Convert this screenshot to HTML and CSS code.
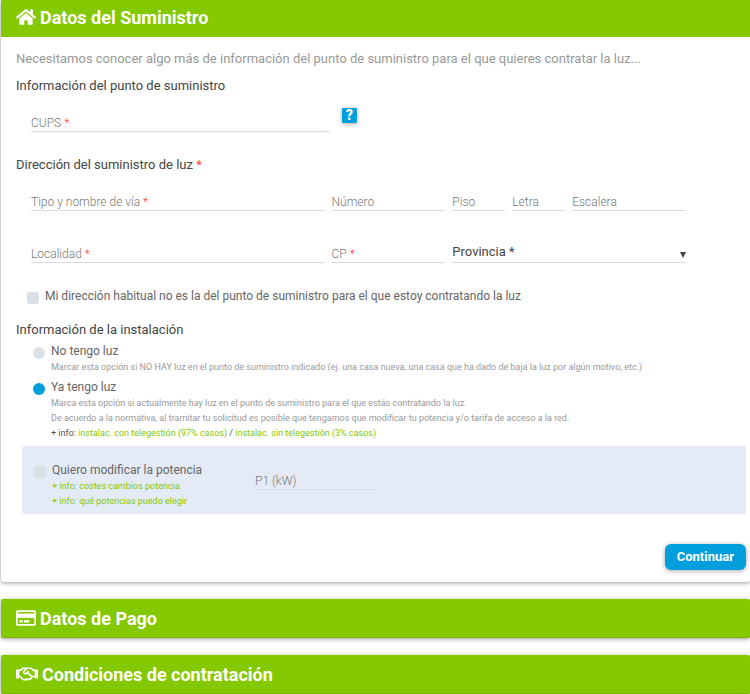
FILE: index.html
```html
<!DOCTYPE html>
<html lang="es">
<head>
    <meta charset="utf-8">
    <title>Datos del Suministro</title>
    <link rel="stylesheet" href="styles.css">
</head>
<body>
<form class="steps">
    <section class="card">
        <h2 class="card-header">
            <svg class="icon" viewBox="0 0 576 512"><path d="M280.37 148.26L96 300.11V464a16 16 0 0 0 16 16l112.06-.29a16 16 0 0 0 15.92-16V368a16 16 0 0 1 16-16h64a16 16 0 0 1 16 16v95.64a16 16 0 0 0 16 16.05L464 480a16 16 0 0 0 16-16V300L295.67 148.26a12.19 12.19 0 0 0-15.3 0zM571.6 251.47L488 182.56V44.05a12 12 0 0 0-12-12h-56a12 12 0 0 0-12 12v72.61L318.47 43a48 48 0 0 0-61 0L4.34 251.47a12 12 0 0 0-1.6 16.9l25.5 31A12 12 0 0 0 45.15 301l235.22-193.74a12.19 12.19 0 0 1 15.3 0L530.9 301a12 12 0 0 0 16.9-1.6l25.5-31a12 12 0 0 0-1.7-16.93z"/></svg>
            Datos del Suministro
        </h2>
        <div class="card-body">
            <p class="intro">Necesitamos conocer algo más de información del punto de suministro para el que quieres contratar la luz...</p>

            <h3 class="subtitle">Información del punto de suministro</h3>
            <div class="cups-row">
                <div class="field">
                    <label for="cups">CUPS <span class="required">*</span></label>
                    <input id="cups" type="text">
                </div>
                <button class="help" type="button">?</button>
            </div>

            <h3 class="subtitle">Dirección del suministro de luz <span class="required">*</span></h3>
            <div class="address">
                <div class="field">
                    <label for="via">Tipo y nombre de vía <span class="required">*</span></label>
                    <input id="via" type="text">
                </div>
                <div class="field">
                    <label for="numero">Número</label>
                    <input id="numero" type="text">
                </div>
                <div class="field">
                    <label for="piso">Piso</label>
                    <input id="piso" type="text">
                </div>
                <div class="field">
                    <label for="letra">Letra</label>
                    <input id="letra" type="text">
                </div>
                <div class="field">
                    <label for="escalera">Escalera</label>
                    <input id="escalera" type="text">
                </div>
                <div class="field">
                    <label for="localidad">Localidad <span class="required">*</span></label>
                    <input id="localidad" type="text">
                </div>
                <div class="field">
                    <label for="cp">CP <span class="required">*</span></label>
                    <input id="cp" type="text">
                </div>
                <div class="field field-select">
                    <select id="provincia" aria-label="Provincia">
                        <option>Provincia *</option>
                    </select>
                    <svg class="arrow" viewBox="0 0 6 6"><path d="M0 0h6L3 6z"/></svg>
                </div>
            </div>

            <div class="option option-address">
                <input id="otra-direccion" type="checkbox">
                <label for="otra-direccion">Mi dirección habitual no es la del punto de suministro para el que estoy contratando la luz</label>
            </div>

            <h3 class="subtitle">Información de la instalación</h3>
            <div class="option option-radio">
                <input id="no-luz" type="radio" name="luz">
                <div>
                    <label for="no-luz">No tengo luz</label>
                    <p class="note">Marcar esta opción si NO HAY luz en el punto de suministro indicado (ej. una casa nueva, una casa que ha dado de baja la luz por algún motivo, etc.)</p>
                </div>
            </div>
            <div class="option option-radio">
                <input id="ya-luz" type="radio" name="luz" checked>
                <div>
                    <label for="ya-luz">Ya tengo luz</label>
                    <p class="note">Marca esta opción si actualmente hay luz en el punto de suministro para el que estás contratando la luz.</p>
                    <p class="note">De acuerdo a la normativa, al tramitar tu solicitud es posible que tengamos que modificar tu potencia y/o tarifa de acceso a la red.</p>
                    <p class="note note-dark">+ info: <a href="#">instalac. con telegestión (97% casos)</a> / <a href="#">instalac. sin telegestión (3% casos)</a></p>
                </div>
            </div>

            <div class="power">
                <div class="option">
                    <input id="potencia" type="checkbox">
                    <div>
                        <label for="potencia">Quiero modificar la potencia</label>
                        <p class="note"><a href="#">+ info: costes cambios potencia</a></p>
                        <p class="note"><a href="#">+ info: qué potencias puedo elegir</a></p>
                    </div>
                </div>
                <div class="field">
                    <label for="p1">P1 (kW)</label>
                    <input id="p1" type="text">
                </div>
            </div>

            <div class="actions">
                <button class="continue" type="button">Continuar</button>
            </div>
        </div>
    </section>

    <section class="card">
        <h2 class="card-header">
            <svg class="icon" viewBox="0 0 576 512"><path d="M527.9 32H48.1C21.5 32 0 53.5 0 80v352c0 26.5 21.5 48 48.1 48h479.8c26.6 0 48.1-21.5 48.1-48V80c0-26.5-21.5-48-48.1-48zM54.1 80h467.8c3.3 0 6 2.7 6 6v42H48.1V86c0-3.3 2.7-6 6-6zm467.8 352H54.1c-3.3 0-6-2.7-6-6V256h479.8v170c0 3.3-2.7 6-6 6zM192 332v40c0 6.6-5.4 12-12 12h-72c-6.6 0-12-5.4-12-12v-40c0-6.6 5.4-12 12-12h72c6.6 0 12 5.4 12 12zm192 0v40c0 6.6-5.4 12-12 12H236c-6.6 0-12-5.4-12-12v-40c0-6.6 5.4-12 12-12h136c6.6 0 12 5.4 12 12z"/></svg>
            Datos de Pago
        </h2>
    </section>

    <section class="card">
        <h2 class="card-header">
            <svg class="icon icon-wide" viewBox="0 0 640 512"><path d="M519.2 127.9l-47.6-47.6A56.25 56.25 0 0 0 432 64H205.2c-14.8 0-29.1 5.9-39.6 16.3L118 127.9H0v255.7h64c17.6 0 31.8-14.2 31.9-31.7h9.1l84.6 76.4c30.9 25.1 73.8 25.7 105.6 3.8 12.5 10.8 26 15.9 41.1 15.9 18.2 0 35.3-7.4 48.8-24 22.1 8.7 48.2 2.6 64-16.8l26.2-32.3c5.6-6.9 9.1-14.8 10.9-23h57.9c.1 17.5 14.4 31.7 31.9 31.7h64V127.9H519.2zM48 351.6c-8.8 0-16-7.2-16-16s7.2-16 16-16 16 7.2 16 16c0 8.9-7.2 16-16 16zm390-6.9l-26.1 32.2c-2.8 3.4-7.8 4-11.3 1.2l-23.9-19.4-30 36.5c-6 7.3-15 4.8-18 2.4l-36.8-31.5-15.6 19.2c-13.9 17.1-39.2 19.7-55.3 6.6l-97.3-88H96V175.8h41.9l61.7-61.6c2-.8 3.7-1.5 5.7-2.3H262l-38.7 35.5c-29.4 26.9-31.1 72.3-4.4 101.3 14.8 16.2 61.2 41.2 101.5 4.4l8.2-7.5 108.2 87.8c3.4 2.8 3.9 7.9 1.2 11.3zm106-40.8h-69.2c-2.3-2.8-4.9-5.4-7.7-7.7l-102.7-83.4 12.5-11.4c6.5-6 7-16.1 1-22.6L367 167.1c-6-6.5-16.1-6.9-22.6-1l-55.2 50.6c-9.5 8.7-25.7 9.4-34.6 0-9.3-9.9-8.5-25.1 1.2-33.9l65.6-60.2c7.4-6.8 17-10.5 27-10.5l83.7-.2c2.1 0 4.1.8 5.5 2.3l61.7 61.6H544v128zm48 47.7c-8.8 0-16-7.2-16-16s7.2-16 16-16 16 7.2 16 16c0 8.9-7.2 16-16 16z"/></svg>
            Condiciones de contratación
        </h2>
    </section>
</form>
</body>
</html>
```
FILE: styles.css
```css
body {
    margin: 0;
    font-family: Roboto, "Liberation Sans", sans-serif;
    font-size: 12px;
    color: #666;
    background: #fff;
    overflow-x: hidden;
}

h2, h3, p {
    margin: 0;
}

a {
    color: #84c800;
    text-decoration: none;
}

.steps {
    display: flex;
    flex-direction: column;
    gap: 17px;
    padding-left: 1px;
}

.card {
    background: #fff;
    border-radius: 3px;
    box-shadow: 0 1px 4px rgba(0, 0, 0, 0.4);
}

.card-header {
    display: flex;
    align-items: center;
    gap: 4px;
    height: 39px;
    padding: 0 15px;
    box-sizing: border-box;
    border-bottom: 1px solid #78b400;
    border-radius: 2px;
    background: #84c800;
    color: #fff;
    font-size: 18px;
    font-weight: 700;
}

.steps .card:first-child .card-header {
    height: 37px;
    padding-bottom: 3px;
    border-bottom: 0;
    border-radius: 0;
}

.icon {
    width: 20px;
    height: 18px;
    fill: #fff;
}

.icon-wide {
    width: 22px;
}

.card-body {
    padding: 13px 4px 12px 15px;
}

.intro {
    font-size: 13px;
    line-height: 18px;
    color: #999;
}

.subtitle {
    margin-top: 9px;
    font-size: 13px;
    line-height: 18px;
    font-weight: 400;
    color: #444;
}

.required {
    color: #f44;
}

/* the label sits in the same cell as its input */
.field {
    display: grid;
    align-items: end;
}

.field > * {
    grid-area: 1 / 1;
}

.field label {
    font-size: 12px;
    line-height: 18px;
    font-weight: 300;
    color: #777;
    pointer-events: none;
}

.field input,
.field select {
    width: 100%;
    height: 20px;
    padding: 0;
    box-sizing: border-box;
    border: 0;
    border-bottom: 1px solid #d8d8e6;
    background: transparent;
    font: inherit;
    color: #444;
    outline: none;
}

.cups-row {
    display: grid;
    grid-template-columns: 298fr 403fr;
    gap: 12px;
    margin: 13px 0 24px;
    padding-left: 15px;
}

.cups-row .field {
    height: 24px;
}

.help {
    width: 15px;
    height: 15px;
    padding: 0;
    border: 0;
    border-radius: 1px;
    background: #009fdb;
    box-shadow: 0 1px 4px rgba(0, 0, 0, 0.35);
    color: #fff;
    font: 900 14px/15px Roboto, sans-serif;
}

.address {
    display: grid;
    grid-template-columns: 294fr 114fr 53fr 53fr 114fr;
    gap: 32px 7px;
    margin-top: 17px;
    padding: 0 60px 0 15px;
}

.field-select {
    grid-column: 3 / 6;
}

.field select {
    appearance: none;
    padding-bottom: 2px;
    font-size: 13px;
}

.arrow {
    width: 6px;
    height: 6px;
    margin-bottom: 5px;
    justify-self: end;
    fill: #444;
    pointer-events: none;
}

.option {
    display: flex;
    align-items: flex-start;
    gap: 6px;
}

.option input {
    appearance: none;
    flex: none;
    width: 12px;
    height: 12px;
    margin: 4px 0 0;
    border-radius: 3px;
    background: #d9e0e6;
}

.option input[type="radio"] {
    border-radius: 50%;
}

.option input:checked {
    background: #009fdb;
}

.option label {
    display: block;
    line-height: 17px;
}

.option-address {
    margin: 25px 0 16px;
    padding-left: 11px;
}

.option-radio {
    margin-top: 4px;
    padding-left: 17px;
}

.note {
    font-size: 9px;
    line-height: 15px;
    color: #999;
}

.note-dark {
    color: #555;
}

.power {
    display: grid;
    grid-template-columns: 221fr 122fr 357fr;
    align-items: start;
    margin: 5px 0 30px 6px;
    padding: 16px 12px 5px;
    border-radius: 3px;
    background: #e5ebf6;
}

.power .field {
    height: 28px;
}

.actions {
    display: flex;
    justify-content: flex-end;
}

.continue {
    height: 26px;
    padding: 0 12px;
    border: 0;
    border-radius: 6px;
    background: #009fdb;
    box-shadow: 0 1px 5px rgba(0, 0, 0, 0.35);
    color: #fff;
    font: 700 13px/26px Roboto, sans-serif;
}
```
